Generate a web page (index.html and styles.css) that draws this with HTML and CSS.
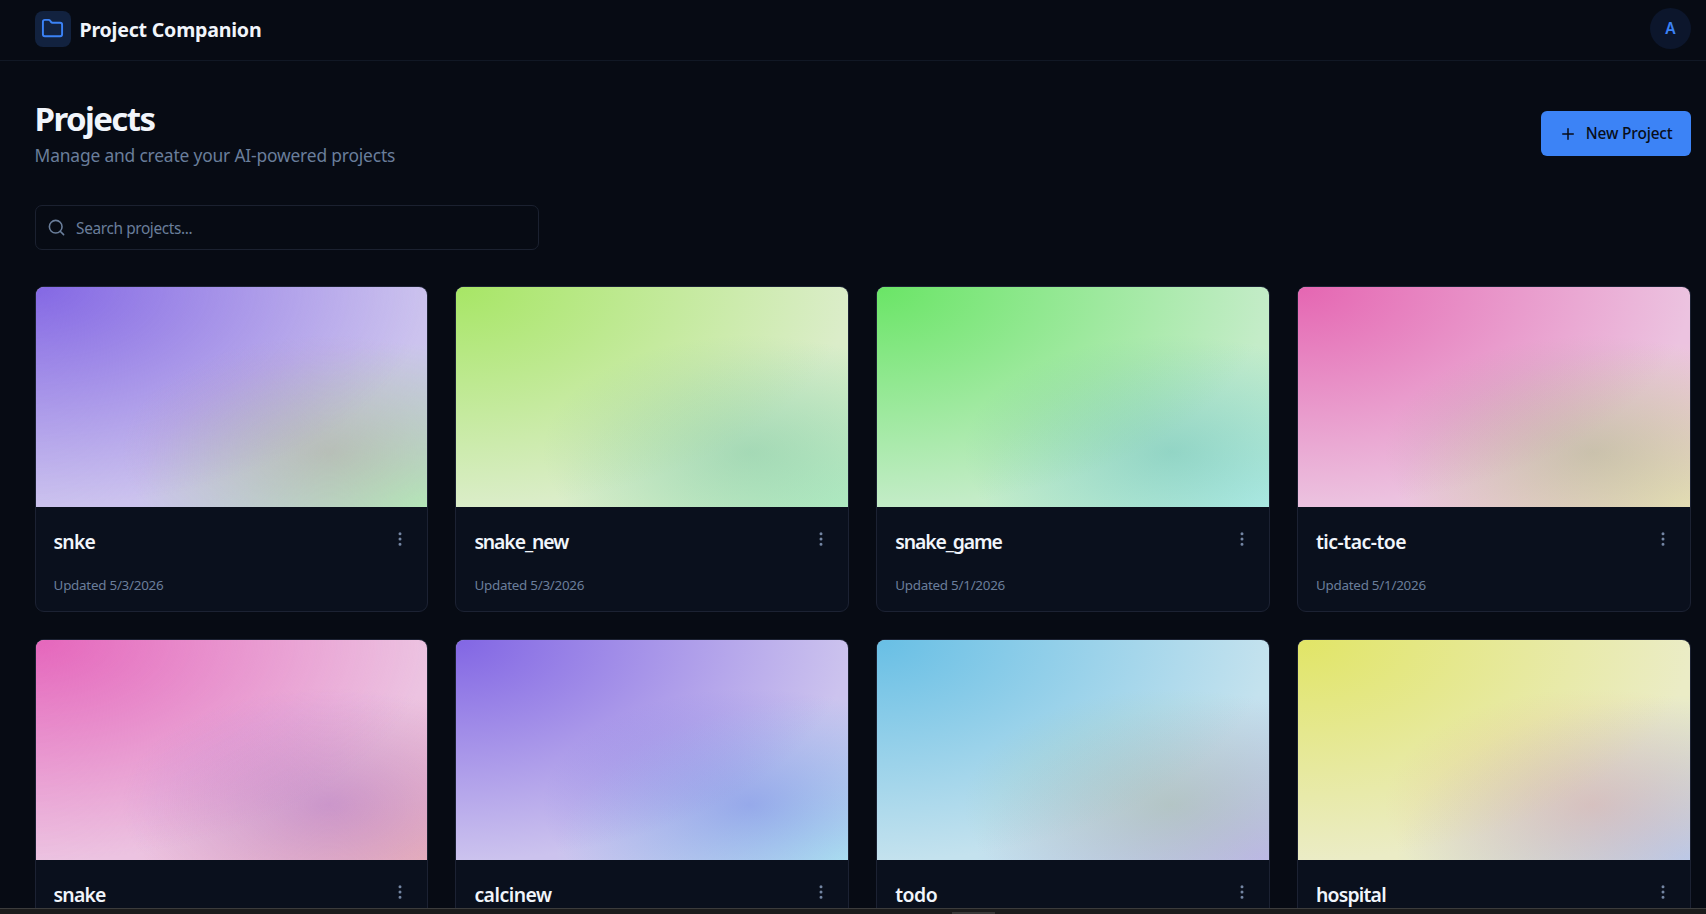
FILE: index.html
```html
<!DOCTYPE html>
<html lang="en">
<head>
<meta charset="utf-8">
<title>Project Companion</title>
<link rel="stylesheet" href="styles.css">
</head>
<body>
<svg class="sprite" aria-hidden="true">
  <symbol id="dots" viewBox="0 0 24 24"><circle cx="12" cy="12" r="1"/><circle cx="12" cy="5" r="1"/><circle cx="12" cy="19" r="1"/></symbol>
</svg>
<div class="screen">
  <header class="topbar">
    <div class="brand">
      <span class="brand-mark"><svg class="icon" viewBox="0 0 24 24"><path d="M20 20a2 2 0 0 0 2-2V8a2 2 0 0 0-2-2h-7.9a2 2 0 0 1-1.69-.9L9.6 3.9A2 2 0 0 0 7.93 3H4a2 2 0 0 0-2 2v13a2 2 0 0 0 2 2Z"/></svg></span>
      <span class="brand-name">Project Companion</span>
    </div>
    <div class="avatar">A</div>
  </header>
  <main class="content">
    <section class="heading">
      <div>
        <h1 class="title">Projects</h1>
        <p class="subtitle">Manage and create your AI-powered projects</p>
      </div>
      <button class="new-project"><svg class="icon" viewBox="0 0 24 24"><path d="M5 12h14M12 5v14"/></svg><span>New Project</span></button>
    </section>
    <div class="search"><svg class="icon" viewBox="0 0 24 24"><circle cx="11" cy="11" r="8"/><path d="m21 21-4.3-4.3"/></svg><span>Search projects...</span></div>
    <section class="grid">
      <article class="card"><div class="cover violet-mint"></div><div class="card-body"><div class="card-head"><h2 class="name snug">snke</h2><svg class="icon more"><use href="#dots"/></svg></div><p class="updated">Updated 5/3/2026</p></div></article>
      <article class="card"><div class="cover lime-mint"></div><div class="card-body"><div class="card-head"><h2 class="name tight">snake_new</h2><svg class="icon more"><use href="#dots"/></svg></div><p class="updated">Updated 5/3/2026</p></div></article>
      <article class="card"><div class="cover green-aqua"></div><div class="card-body"><div class="card-head"><h2 class="name tight">snake_game</h2><svg class="icon more"><use href="#dots"/></svg></div><p class="updated">Updated 5/1/2026</p></div></article>
      <article class="card"><div class="cover pink-sand"></div><div class="card-body"><div class="card-head"><h2 class="name">tic-tac-toe</h2><svg class="icon more"><use href="#dots"/></svg></div><p class="updated">Updated 5/1/2026</p></div></article>
      <article class="card"><div class="cover pink-rose"></div><div class="card-body"><div class="card-head"><h2 class="name snug">snake</h2><svg class="icon more"><use href="#dots"/></svg></div></div></article>
      <article class="card"><div class="cover violet-sky"></div><div class="card-body"><div class="card-head"><h2 class="name">calcinew</h2><svg class="icon more"><use href="#dots"/></svg></div></div></article>
      <article class="card"><div class="cover sky-lilac"></div><div class="card-body"><div class="card-head"><h2 class="name">todo</h2><svg class="icon more"><use href="#dots"/></svg></div></div></article>
      <article class="card"><div class="cover yellow-blue"></div><div class="card-body"><div class="card-head"><h2 class="name snug">hospital</h2><svg class="icon more"><use href="#dots"/></svg></div></div></article>
    </section>
  </main>
  <footer class="dock"><span class="dock-handle"></span></footer>
</div>
</body>
</html>
```
FILE: styles.css
```css
* { box-sizing: border-box; margin: 0; padding: 0; }
body { background: #070b14; color: #f1f5fb; font-family: "Segoe UI", "Noto Sans", "Open Sans", sans-serif; overflow: hidden; }
.sprite { display: none; }
.screen { display: flex; flex-direction: column; height: 914px; overflow: hidden; }
.icon { fill: none; stroke: currentColor; stroke-width: 2; stroke-linecap: round; stroke-linejoin: round; flex: none; }

.topbar { height: 61px; flex: none; padding: 8px 15px 11px 35px; border-bottom: 1px solid #111825; display: flex; justify-content: space-between; align-items: center; }
.brand { display: flex; align-items: center; gap: 8.5px; }
.brand-mark { width: 36px; height: 36px; border-radius: 8px; background: #12223f; color: #3b82f6; display: flex; padding: 6px 0 0 6px; }
.brand-mark .icon { width: 23px; height: 23px; }
.brand-name { font-size: 19.6px; line-height: 28px; font-weight: 700; letter-spacing: -0.22px; padding-top: 2px; }
.avatar { width: 41px; height: 41px; border-radius: 50%; background: #0c162c; color: #3b82f6; font-size: 15.4px; font-weight: 600; line-height: 41px; text-align: center; }

.content { flex: 1; min-height: 0; overflow: hidden; padding: 37px 15.2px 0 34.6px; }
.heading { display: flex; justify-content: space-between; align-items: center; height: 71px; }
.title { font-size: 33px; line-height: 40px; font-weight: 700; letter-spacing: -1.6px; padding-top: 1px; }
.subtitle { font-size: 17.4px; line-height: 31px; color: #6a7e9b; letter-spacing: -0.18px; padding-top: 1px; margin-bottom: -1px; }
.new-project { width: 150px; height: 45px; border: 0; border-radius: 6px; background: #3c83f6; color: #080d18; font: inherit; font-size: 15.4px; font-weight: 500; letter-spacing: -0.15px; display: flex; align-items: center; padding-left: 18px; gap: 9px; }
.new-project .icon { width: 18px; height: 18px; }
.search { margin-top: 36px; width: 504px; height: 45px; border: 1px solid #1b2130; border-radius: 7px; display: flex; align-items: center; gap: 10px; padding-left: 11.5px; color: #6a7e9b; font-size: 15.4px; letter-spacing: -0.38px; }
.search span { padding-top: 1px; }
.search .icon { width: 19px; height: 19px; }

.grid { margin-top: 36px; display: grid; grid-template-columns: repeat(4, 1fr); grid-auto-rows: 326px; gap: 27px; }
.card { border: 1px solid #1c2233; border-radius: 9px; background: #0a101d; overflow: hidden; }
.cover { height: 220px; background-color: rgb(var(--base)); background-image:
  radial-gradient(at 75% 75%, rgb(var(--spot) / 0.4), rgb(var(--spot) / 0) 50%),
  radial-gradient(at 0% 0%, rgb(var(--from)), rgb(var(--from) / 0) 71%),
  radial-gradient(at 100% 100%, rgb(var(--to)), rgb(var(--to) / 0) 53%); }
.violet-mint { --from: 132 104 228; --base: 204 195 238; --to: 182 243 191; --spot: 170 146 139; }
.lime-mint { --from: 167 230 101; --base: 219 237 201; --to: 183 240 198; --spot: 112 185 155; }
.green-aqua { --from: 106 229 102; --base: 196 236 200; --to: 183 241 236; --spot: 82 174 164; }
.pink-sand { --from: 229 102 178; --base: 236 195 224; --to: 239 230 187; --spot: 148 162 124; }
.pink-rose { --from: 229 102 188; --base: 236 195 225; --to: 240 184 186; --spot: 150 92 199; }
.violet-sky { --from: 130 102 228; --base: 204 195 238; --to: 182 240 242; --spot: 87 95 225; }
.sky-lilac { --from: 104 191 229; --base: 196 226 238; --to: 192 183 243; --spot: 158 187 133; }
.yellow-blue { --from: 225 229 102; --base: 235 236 198; --to: 182 208 244; --spot: 224 150 145; }

.card-body { padding: 20px 18px; }
.card-head { display: flex; justify-content: space-between; height: 43px; }
.name { font-size: 19.4px; line-height: 30px; font-weight: 600; letter-spacing: -0.5px; }
.name.snug { letter-spacing: -0.8px; }
.name.tight { letter-spacing: -1.1px; }
.more { width: 18px; height: 18px; margin: 3px 0 0; color: #7486a3; }
.updated { font-size: 13.4px; line-height: 30px; color: #6a7e9b; letter-spacing: -0.25px; }

.dock { height: 6px; flex: none; background: #1c1c1c; border-top: 1px solid #3c3c3c; display: flex; align-items: flex-end; padding-left: 952px; }
.dock-handle { width: 43px; height: 2px; background: #383838; }
```
